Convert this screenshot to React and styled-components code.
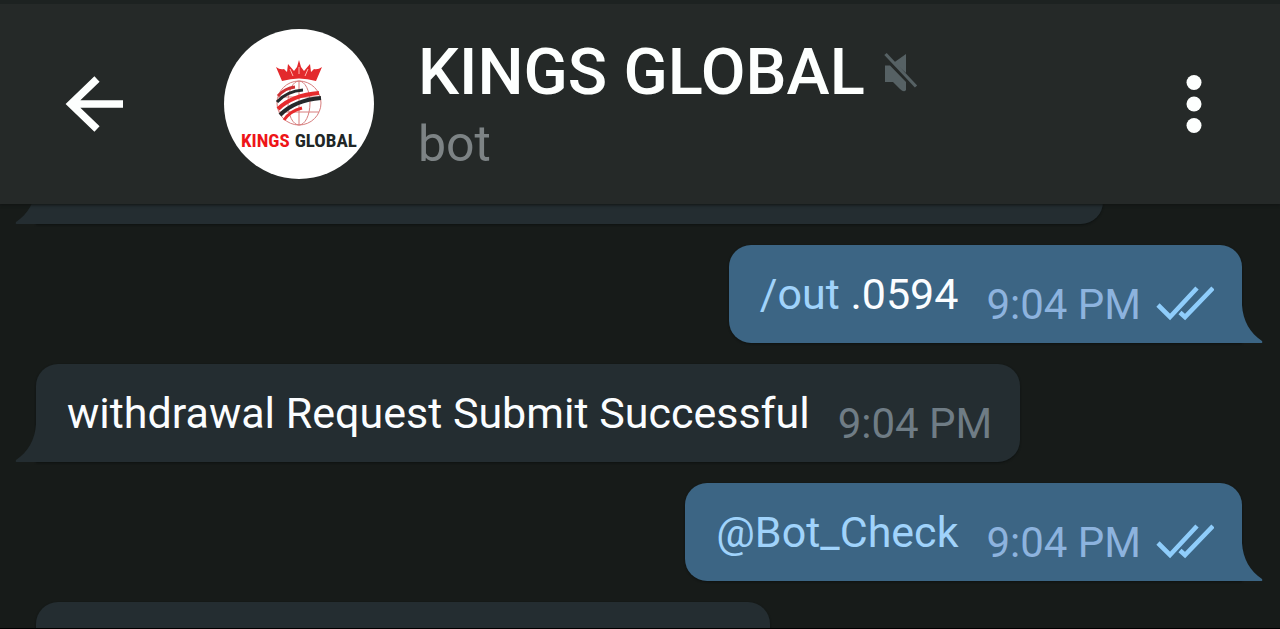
import React from "react";
import styled, { createGlobalStyle } from "styled-components";

const Global = createGlobalStyle`
  * { box-sizing: border-box; }
  body {
    margin: 0;
    background: #171b19;
    font-family: Roboto, "Noto Sans", sans-serif;
  }
`;

const Screen = styled.div`
  display: flex;
  flex-direction: column;
  height: 100vh;
  overflow: hidden;
  background: #171b19;
  border-bottom: 1px solid #000;
`;

const Header = styled.header`
  position: relative;
  z-index: 1;
  flex: none;
  display: flex;
  align-items: center;
  padding: 25px 70px 25px 56px;
  border-top: 4px solid #1d2221;
  background: #252928;
  box-shadow: 0 1px 3px #101413;
`;

const IconButton = styled.button`
  flex: none;
  display: flex;
  padding: 8px;
  border: 0;
  background: none;
  color: #fdfffe;
  cursor: pointer;
`;

const Avatar = styled.div`
  flex: none;
  display: flex;
  flex-direction: column;
  align-items: center;
  width: 150px;
  height: 150px;
  margin: 0 44px 0 92px;
  padding-top: 30px;
  border-radius: 50%;
  background: #fff;
`;

const Wordmark = styled.div`
  display: flex;
  gap: 5px;
  font: bold 19px/28px "Liberation Sans Narrow", "Roboto Condensed", Roboto, sans-serif;
  color: #202626;
`;

const WordmarkLead = styled.span`
  color: #ee1518;
`;

const Heading = styled.div`
  flex: 1;
  min-width: 0;
`;

const TitleRow = styled.div`
  display: flex;
  align-items: center;
  gap: 18px;
`;

const Title = styled.h1`
  margin: 0;
  font-size: 65px;
  font-weight: 500;
  line-height: 80px;
  white-space: nowrap;
  color: #fdfffe;
`;

const Subtitle = styled.p`
  margin: 0;
  font-size: 50px;
  line-height: 64px;
  color: #7d8385;
`;

const Thread = styled.main`
  flex: 1;
  min-height: 0;
  display: flex;
  flex-direction: column;
  gap: 21px;
  margin-top: -78px;
  padding: 0 38px 0 36px;
`;

const Bubble = styled.article`
  position: relative;
  flex: none;
  display: flex;
  align-items: flex-end;
  gap: 28px;
  min-height: 98px;
  width: ${(p) => p.$width || "auto"};
  align-self: ${(p) => (p.$out ? "flex-end" : "flex-start")};
  padding: 24px 28px 13px 31px;
  border-radius: ${(p) => (p.$out ? "22px 22px 0 22px" : "22px 22px 22px 0")};
  background: ${(p) => (p.$out ? "#3c6584" : "#242d31")};
  color: ${(p) => (p.$out ? "#3c6584" : "#242d31")};
  box-shadow: 0 1px 2px #0e1211;
`;

const Tail = styled.svg`
  position: absolute;
  bottom: 0;
  ${(p) => (p.$out ? "right: -21px; transform: scaleX(-1);" : "left: -21px;")}
`;

const Text = styled.p`
  margin: 0 0 11px;
  font-size: 43px;
  line-height: 50px;
  white-space: nowrap;
  color: #fbfdff;
`;

const TextLink = styled.a`
  color: #a0d3fb;
  text-decoration: none;
`;

const Meta = styled.div`
  display: flex;
  align-items: center;
  gap: 15px;
  font-size: 42px;
  line-height: 50px;
  white-space: nowrap;
  color: ${(p) => (p.$out ? "#8db3de" : "#6f7c85")};
`;

function Message({ out, width, time, children }) {
  return (
    <Bubble $out={out} $width={width}>
      <Tail $out={out} width="22" height="38" viewBox="0 0 22 38" aria-hidden="true">
        <path d="M22 0H21C20 16 13 28 1 36Q0 38 2 38H22Z" fill="currentColor" />
      </Tail>
      {children && <Text>{children}</Text>}
      {time && (
        <Meta $out={out}>
          <time>{time}</time>
          {out && <ReadTicks />}
        </Meta>
      )}
    </Bubble>
  );
}

function ReadTicks() {
  return (
    <svg width="58" height="40" viewBox="0 0 58 40" fill="none" stroke="#8fcdfb" strokeWidth="4.6" role="img" aria-label="Read">
      <path d="M2 20L14 32L41 3" />
      <path d="M24 27.500L29 32L57 3" />
    </svg>
  );
}

function BackIcon() {
  return (
    <svg width="60" height="56" viewBox="0 0 60 56" fill="none" stroke="currentColor" strokeWidth="7.500" aria-hidden="true">
      <path d="M33 3L7 28L33 53M7 28H59" />
    </svg>
  );
}

function MoreIcon() {
  return (
    <svg width="16" height="60" viewBox="0 0 16 60" fill="currentColor" aria-hidden="true">
      <circle cx="8" cy="8.500" r="7.500" />
      <circle cx="8" cy="30" r="7.500" />
      <circle cx="8" cy="51.500" r="7.500" />
    </svg>
  );
}

function MutedIcon() {
  return (
    <svg width="36" height="42" viewBox="0 0 36 42" role="img" aria-label="Muted">
      <path d="M23 3V22L11 11.500Z" fill="#566164" />
      <path d="M2 14.500H7L23 31V39Q21 42 17 38L10 31H2Z" fill="#566164" />
      <path d="M2.500 3L33 35.500" fill="none" stroke="#566164" strokeWidth="3.200" />
    </svg>
  );
}

function Crest() {
  return (
    <svg width="48" height="68" viewBox="0 0 48 68" fill="none" aria-hidden="true">
      <g stroke="#d77d7d" strokeWidth="1">
        <circle cx="24" cy="44" r="22" />
        <ellipse cx="24" cy="44" rx="11" ry="22" />
        <path d="M24 22V66M3 38H45M4 53H44" />
      </g>
      <path d="M1 8Q5 11 9 10L12 13L13 5L19 12L22 8L24 1L26 8L29 12L35 5L36 13L39 10Q43 11 47 8L41 22Q24 17 7 22Z" fill="#e3292c" />
      <path d="M24 8V15M15 10L18 17M33 10L30 17" stroke="#ffb5ae" strokeWidth="1" />
      <path d="M3 37Q10 29 20 28" stroke="#cf3034" strokeWidth="3" />
      <path d="M2 43Q12 32 28 31" stroke="#26292b" strokeWidth="3" />
      <path d="M3 50Q17 36 44 34" stroke="#e72b2d" strokeWidth="4" />
      <path d="M5 56Q20 41 46 39" stroke="#26292b" strokeWidth="4" />
      <path d="M9 61Q15 52 27 49" stroke="#e72b2d" strokeWidth="3" />
    </svg>
  );
}

export default function App() {
  return (
    <Screen>
      <Global />
      <Header>
        <IconButton type="button" aria-label="Back">
          <BackIcon />
        </IconButton>
        <Avatar>
          <Crest />
          <Wordmark>
            <WordmarkLead>KINGS</WordmarkLead>
            <span>GLOBAL</span>
          </Wordmark>
        </Avatar>
        <Heading>
          <TitleRow>
            <Title>KINGS GLOBAL</Title>
            <MutedIcon />
          </TitleRow>
          <Subtitle>bot</Subtitle>
        </Heading>
        <IconButton type="button" aria-label="More options">
          <MoreIcon />
        </IconButton>
      </Header>
      <Thread>
        <Message width="1067px" />
        <Message out time="9:04 PM">
          <TextLink href="#out">/out</TextLink> .0594
        </Message>
        <Message time="9:04 PM">withdrawal Request Submit Successful</Message>
        <Message out time="9:04 PM">
          <TextLink href="#bot">@Bot_Check</TextLink>
        </Message>
        <Message width="734px" />
      </Thread>
    </Screen>
  );
}
